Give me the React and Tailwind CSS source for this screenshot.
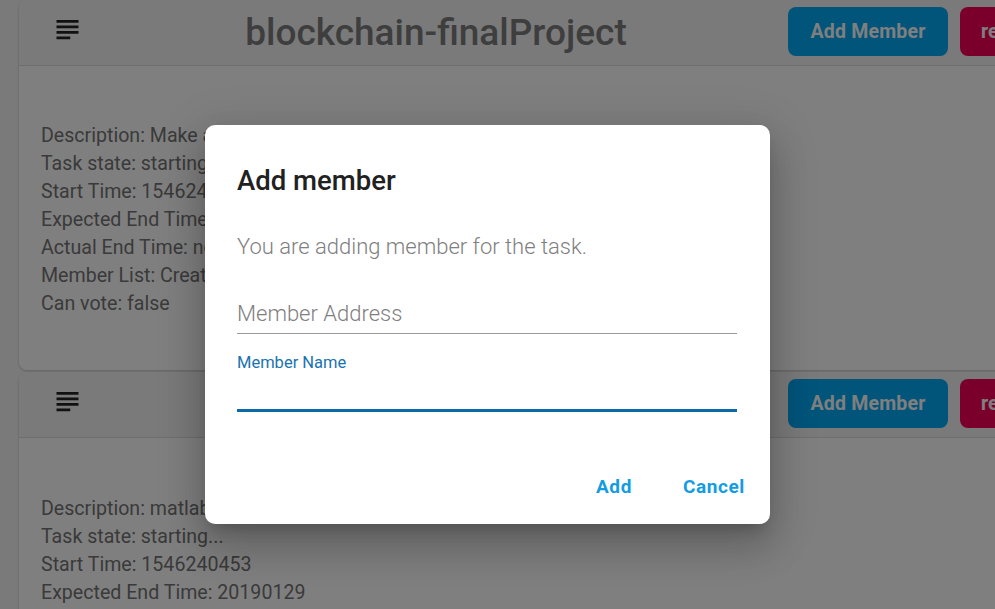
import React from "react";

function SubjectIcon() {
  return (
    <svg width="33" height="33" viewBox="0 0 24 24" className="block">
      <path fill="#222" d="M14 17H4v2h10v-2zm6-8H4v2h16V9zM4 15h16v-2H4v2zM4 5v2h16V5H4z" />
    </svg>
  );
}

function CardHeader({ title }) {
  return (
    <div className="flex items-center h-[66px] border-b border-[#dcdcdc] bg-[#f5f5f5] pl-[32px]">
      <div className="w-[33px] h-[33px] -mt-[7px] shrink-0">
        <SubjectIcon />
      </div>
      <div className="w-[704px] shrink-0 text-center text-[37px] leading-[42px] font-medium text-[#7c7c7c] mt-[1px] whitespace-nowrap">
        {title}
      </div>
      <div className="flex gap-3 -mt-[3px] shrink-0">
        <div className="w-[160px] h-[49px] rounded-[8px] bg-[#03a9f4] text-white text-[19.5px] font-bold flex items-center justify-center tracking-[0.2px] pt-[1px]">
          Add Member
        </div>
        <div className="w-[190px] h-[49px] rounded-[8px] bg-[#f50057] text-white text-[19.5px] font-bold flex items-center justify-start pl-[21px] pt-[1px] whitespace-nowrap">
          remove
        </div>
      </div>
    </div>
  );
}

function Lines({ lines }) {
  return (
    <div className="text-[19.6px] leading-[28px] text-[#757575]">
      {lines.map((l, i) => (
        <div key={i} className="whitespace-nowrap">{l}</div>
      ))}
    </div>
  );
}

export default function App() {
  return (
    <div
      className="relative w-[995px] h-[609px] overflow-hidden bg-[#f5f5f5]"
      style={{ fontFamily: "Roboto, 'Noto Sans', sans-serif" }}
    >
      <div className="pl-[19px] flex flex-col gap-[2px]">
        <div className="w-[1200px] h-[370px] rounded-[8px] bg-white overflow-hidden shadow-[0_1px_3px_rgba(0,0,0,0.2)]">
          <CardHeader title="blockchain-finalProject" />
          <div className="pt-[56px] pl-[22px]">
            <Lines
              lines={[
                "Description: Make a blockchain app",
                "Task state: starting...",
                "Start Time: 1546240320",
                "Expected End Time: 20190129",
                "Actual End Time: not yet",
                "Member List: Creator",
                "Can vote: false",
              ]}
            />
          </div>
        </div>
        <div className="w-[1200px] h-[400px] rounded-[8px] bg-white overflow-hidden shadow-[0_1px_3px_rgba(0,0,0,0.2)]">
          <CardHeader title="" />
          <div className="pt-[57px] pl-[22px]">
            <Lines
              lines={[
                "Description: matlab homework",
                "Task state: starting...",
                "Start Time: 1546240453",
                "Expected End Time: 20190129",
              ]}
            />
          </div>
        </div>
      </div>

      <div className="absolute inset-0 bg-black/50" />

      <div className="absolute left-[205px] top-[125px] w-[565px] h-[399px] bg-white rounded-[10px] shadow-[0_11px_15px_-7px_rgba(0,0,0,0.2),0_24px_38px_3px_rgba(0,0,0,0.14),0_9px_46px_8px_rgba(0,0,0,0.12)]">
        <div className="pl-[32px] pr-[33px]">
          <div className="pt-[40px] text-[27.5px] leading-[32px] font-medium text-[#212121]">
            Add member
          </div>
          <div className="mt-[36px] text-[22px] leading-[28px] text-[#7f7f7f] font-light">
            You are adding member for the task.
          </div>
          <div className="mt-[39px] text-[22px] leading-[28px] text-[#7f7f7f] font-light pb-[5px] border-b border-[#9a9a9a]">
            Member Address
          </div>
          <div className="mt-[19px] text-[16.5px] leading-[20px] text-[#1a73b0]">
            Member Name
          </div>
          <div className="h-[39px] border-b-[3px] border-[#0d6aa8]" />
        </div>
        <div className="flex justify-end items-center pr-[25px] mt-[63px] gap-[51px] text-[19px] leading-[24px] font-bold text-[#149ce3] tracking-[0.6px]">
          <span>Add</span>
          <span>Cancel</span>
        </div>
      </div>
    </div>
  );
}
